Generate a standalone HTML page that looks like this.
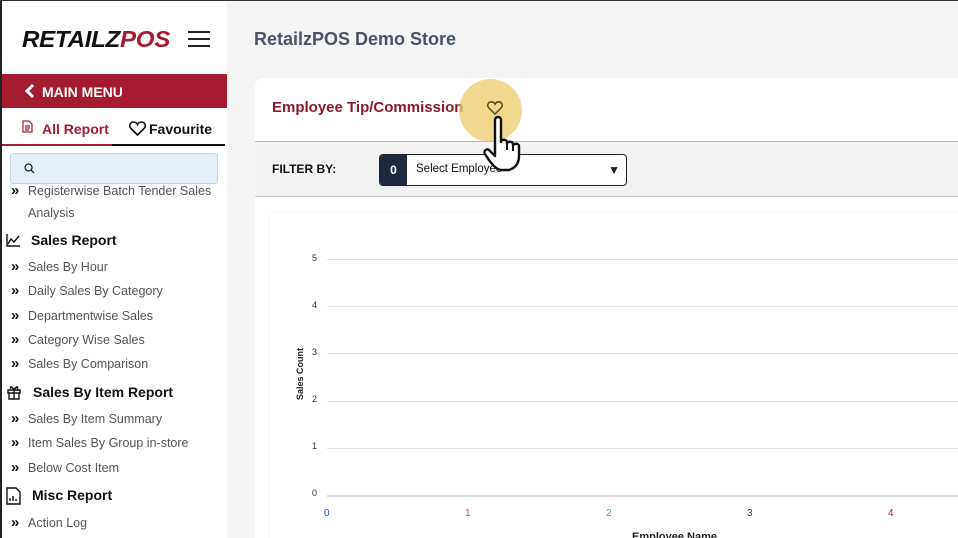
<!DOCTYPE html>
<html style="overflow:hidden;width:958px;height:538px"><head><meta charset="utf-8"><style>
*{margin:0;padding:0;box-sizing:border-box}
body{width:958px;height:538px;overflow:hidden;background:#f4f4f5;font-family:"Liberation Sans",Arial,sans-serif;position:relative}
.sb{position:absolute;left:0;top:0;width:227px;height:538px;background:#fff;border-left:2px solid #222;border-top:1px solid #333}
.logo{position:absolute;left:20px;top:25px;font-size:23px;font-weight:900;font-style:italic;letter-spacing:-0.3px;color:#111;transform:scaleX(1.05);transform-origin:left}
.logo span{color:#a51c30}
.hamb{position:absolute;left:186px;top:30px;width:22px}
.hamb i{display:block;height:2px;background:#222;margin-bottom:5px}
.mm{position:absolute;left:0;top:73px;width:225px;height:34px;background:#a51c30;color:#fff;font-weight:bold;font-size:14px;padding:10px 0 0 40px}
.mm:before{content:"";position:absolute;left:25px;top:12px;width:7px;height:7px;border-left:3px solid #fff;border-bottom:3px solid #fff;transform:rotate(45deg)}
.tab{position:absolute;top:113px;font-size:14px;font-weight:bold;height:32px;padding-top:7px}
.t1{left:0;width:110px;color:#a51c30;border-bottom:2px solid #a51c30;padding-left:40px}
.t2{left:110px;width:113px;color:#111;border-bottom:2px solid #111;padding-left:37px}
.srch{position:absolute;left:8px;top:152px;width:208px;height:31px;background:#e6f0fb;border:1px solid #c8d4e0;border-radius:3px}
.it{position:absolute;left:26px;font-size:12.5px;color:#555}
.it:before{content:"»";position:absolute;left:-17px;top:-2px;font-size:15px;color:#111;font-weight:bold}
.hd{position:absolute;font-size:14px;font-weight:bold;color:#111}
.title{position:absolute;left:254px;top:29px;font-size:18px;font-weight:bold;color:#4a5468}
.card{position:absolute;left:255px;top:78px;width:710px;height:480px;background:#fff;border-radius:8px}
.ct{position:absolute;left:272px;top:99px;font-size:15px;font-weight:bold;color:#8b1a2c}
.fb{position:absolute;left:255px;top:141px;width:703px;height:56px;background:#f2f2f2;border-top:1px solid #bbb;border-bottom:1px solid #ccc}
.gl{position:absolute;left:327px;width:640px;height:1px;background:#e2e2e2}
.yl{position:absolute;left:312px;font-size:9px;color:#333}
.xl{position:absolute;top:508px;font-size:10px}
</style></head><body>
<div style="position:absolute;left:0;top:0;width:958px;height:1px;background:#333"></div>
<div class="sb">
<div class="logo">RETAILZ<span>POS</span></div>
<div class="hamb"><i></i><i></i><i></i></div>
<div class="mm">MAIN MENU</div>
<div class="tab t1">All Report</div>
<svg style="position:absolute;left:20px;top:119px" width="11" height="13" viewBox="0 0 11 13"><path d="M1 1h6l3 3v8H1z M3 6h5M3 8h5M3 10h4" fill="none" stroke="#a51c30" stroke-width="1.2"/></svg>
<div class="tab t2">Favourite</div>
<svg style="position:absolute;left:127px;top:120px" width="17" height="15" viewBox="0 0 17 15"><path d="M8.5 14L2 7.5C-0.5 5 1 1 4.5 1C6.5 1 8 2.5 8.5 3.5C9 2.5 10.5 1 12.5 1C16 1 17.5 5 15 7.5Z" fill="none" stroke="#111" stroke-width="1.6"/></svg>
<div class="srch"><svg style="position:absolute;left:13px;top:9px" width="11" height="11"><circle cx="4.5" cy="4.5" r="3.5" fill="none" stroke="#222" stroke-width="1.3"/><path d="M7 7l3 3" stroke="#222" stroke-width="1.3"/></svg></div>
<div class="it" style="top:183px">Registerwise Batch Tender Sales</div>
<div style="position:absolute;left:26px;top:205px;font-size:12.5px;color:#555">Analysis</div>
<svg style="position:absolute;left:4px;top:233px" width="14" height="13"><path d="M1 0v12h13M2 10l3-5 3 3 5-6" fill="none" stroke="#111" stroke-width="1.4"/></svg>
<div class="hd" style="left:29px;top:231px">Sales Report</div>
<div class="it" style="top:259px">Sales By Hour</div>
<div class="it" style="top:283px">Daily Sales By Category</div>
<div class="it" style="top:308px">Departmentwise Sales</div>
<div class="it" style="top:332px">Category Wise Sales</div>
<div class="it" style="top:356px">Sales By Comparison</div>
<svg style="position:absolute;left:4px;top:382px" width="16" height="17"><path d="M2 7h12v3H2zM3 10h10v6H3zM8 7v9M8 7C6 3 3 3 5 6M8 7c2-4 5-4 3-1" fill="none" stroke="#111" stroke-width="1.4"/></svg>
<div class="hd" style="left:31px;top:383px">Sales By Item Report</div>
<div class="it" style="top:411px">Sales By Item Summary</div>
<div class="it" style="top:435px">Item Sales By Group in-store</div>
<div class="it" style="top:460px">Below Cost Item</div>
<svg style="position:absolute;left:4px;top:486px" width="15" height="18"><path d="M1 1h9l4 4v12H1z M4 14v-3M7 14v-5M10 14v-2" fill="none" stroke="#111" stroke-width="1.4"/></svg>
<div class="hd" style="left:30px;top:486px">Misc Report</div>
<div class="it" style="top:515px">Action Log</div>
</div>
<div class="title">RetailzPOS Demo Store</div>
<div class="card"></div>
<div class="ct">Employee Tip/Commission</div>
<div style="position:absolute;left:459px;top:79px;width:63px;height:63px;border-radius:50%;background:rgba(235,205,110,.75)"></div>
<div style="position:absolute;left:476px;top:93px;width:38px;height:30px;border-radius:4px;background:rgba(240,215,140,.8)"></div>
<svg style="position:absolute;left:487px;top:101px" width="16" height="14" viewBox="0 0 17 15"><path d="M8.5 14L2 7.5C-0.5 5 1 1 4.5 1C6.5 1 8 2.5 8.5 3.5C9 2.5 10.5 1 12.5 1C16 1 17.5 5 15 7.5Z" fill="none" stroke="#5a4a20" stroke-width="1.6"/></svg>
<div class="fb"></div>
<div style="position:absolute;left:272px;top:162px;font-size:12px;font-weight:bold;color:#111">FILTER BY:</div>
<div style="position:absolute;left:379px;top:154px;width:248px;height:32px;border:1px solid #222;border-radius:4px;background:#fff;overflow:hidden">
<div style="position:absolute;left:0;top:0;width:27px;height:32px;background:#1e2a3e;color:#fff;font-weight:bold;font-size:12px;text-align:center;padding-top:8px">0</div>
<div style="position:absolute;left:36px;top:8px;font-size:11.5px;color:#111">Select Employee</div>
<div style="position:absolute;right:6px;top:8px;font-size:12px;color:#222">▼</div></div>
<svg style="position:absolute;left:481px;top:114px" width="50" height="60" viewBox="0 0 50 60"><path d="M14 6c0-4 6-4 6 0v22c0-3 6-3 6 0v2c0-3 6-3 6 0v2c0-3 6-3 6 0v10c0 8-4 12-10 14h-8C14 55 9 48 4 40c-2-3 2-6 4-4l6 6z" fill="#fff" stroke="#111" stroke-width="2.4" stroke-linejoin="round"/><path d="M26 30v6M32 32v5" stroke="#111" stroke-width="2"/></svg>
<div style="position:absolute;left:270px;top:213px;width:690px;height:340px;background:#fff;border-radius:6px;box-shadow:0 0 4px rgba(0,0,0,.06)"></div>
<div class="gl" style="top:259px"></div><div class="gl" style="top:306px"></div><div class="gl" style="top:353px"></div><div class="gl" style="top:401px"></div><div class="gl" style="top:448px"></div><div class="gl" style="top:495px;height:2px;background:#ddd"></div>
<div class="yl" style="top:253px">5</div><div class="yl" style="top:300px">4</div><div class="yl" style="top:347px">3</div><div class="yl" style="top:394px">2</div><div class="yl" style="top:441px">1</div><div class="yl" style="top:488px">0</div>
<div style="position:absolute;left:265px;top:369px;transform:rotate(-90deg);font-size:9px;font-weight:bold;color:#222;width:70px;text-align:center">Sales Count</div>
<div class="xl" style="left:324px;color:#2255cc">0</div><div class="xl" style="left:465px;color:#d2622a">1</div><div class="xl" style="left:606px;color:#33aacc">2</div><div class="xl" style="left:747px;color:#1d5050">3</div><div class="xl" style="left:888px;color:#b01e2a">4</div>
<div style="position:absolute;left:632px;top:531px;font-size:11px;font-weight:bold;color:#222">Employee Name</div>
</body></html>
